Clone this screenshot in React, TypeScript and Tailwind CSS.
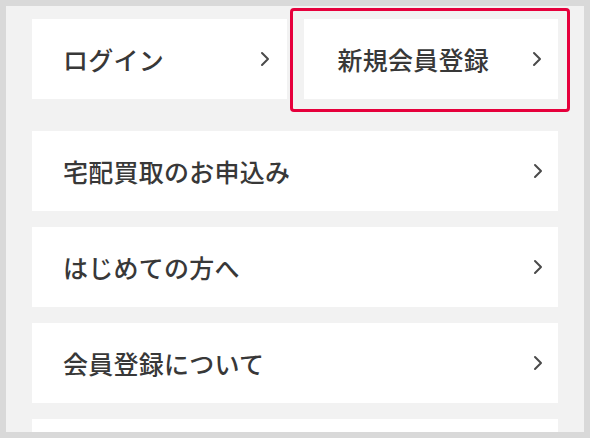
import type { FC } from "react";

const Chevron: FC = () => (
  <svg
    width="10"
    height="16"
    viewBox="0 0 10 16"
    fill="none"
    className="shrink-0"
    aria-hidden
  >
    <polyline
      points="2,2 8,8 2,14"
      stroke="#4a4a4a"
      strokeWidth="2"
      strokeLinecap="round"
      strokeLinejoin="round"
    />
  </svg>
);

type CardProps = { label: string; className?: string };

const MenuCard: FC<CardProps> = ({ label, className = "" }) => (
  <a
    href="#"
    className={`flex h-[80px] items-center justify-between bg-white text-[25px] font-medium text-[#383838] ${className}`}
  >
    <span className="leading-none tracking-[0.01em]">{label}</span>
    <Chevron />
  </a>
);

const rows = ["宅配買取のお申込み", "はじめての方へ", "会員登録について"];

export default function App() {
  return (
    <div
      className="h-[438px] w-[590px] bg-[#d9d9d9] p-[6px]"
      style={{ fontFamily: '"Noto Sans CJK JP", "Noto Sans", sans-serif' }}
    >
      <div className="relative h-full overflow-hidden bg-[#f2f2f2] px-[26px] pt-[13px]">
        <div className="relative grid grid-cols-2 gap-[17px]">
          <MenuCard label="ログイン" className="pl-[31px] pr-[17px]" />
          <MenuCard label="新規会員登録" className="pl-[34px] pr-[16px]" />
          <div className="pointer-events-none absolute -top-[11px] -bottom-[13px] -right-[12px] left-[258px] rounded-[4px] border-[3px] border-[#e6003c]" />
        </div>

        <div className="mt-[32px] flex flex-col gap-[16px]">
          {rows.map((r) => (
            <MenuCard key={r} label={r} className="pl-[31px] pr-[15px]" />
          ))}
          {/* next item, cut off by the frame */}
          <div className="h-[80px] bg-white" />
        </div>
      </div>
    </div>
  );
}
